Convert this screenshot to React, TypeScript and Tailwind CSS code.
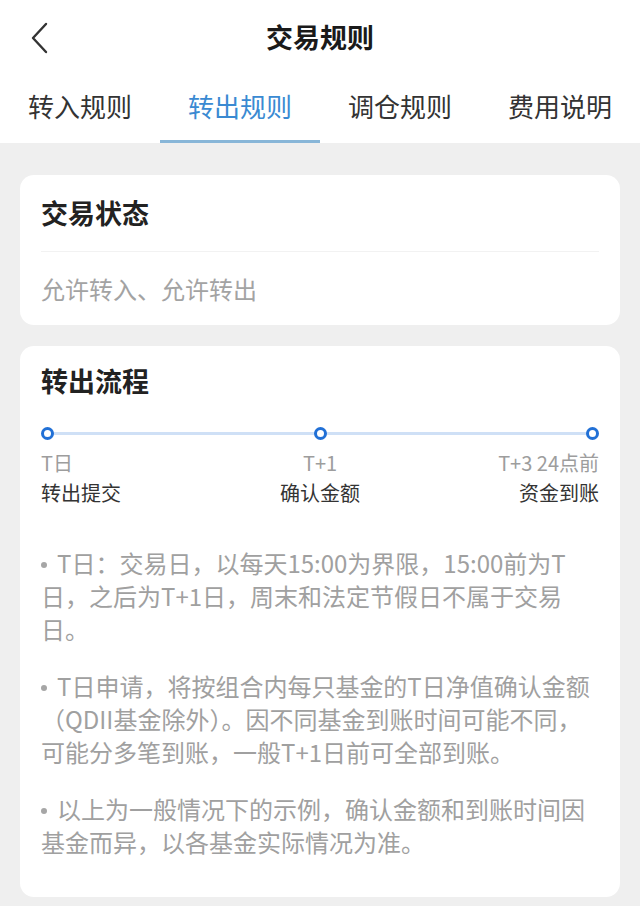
import React from "react";

const font = { fontFamily: '"Noto Sans CJK SC", "Noto Sans", sans-serif' };

function Dot() {
  return <div className="w-[13px] h-[13px] rounded-full border-[3px] border-[#2170d6] bg-white shrink-0" />;
}

function Bullet() {
  return <span className="inline-block w-[6px] h-[6px] rounded-full bg-[#a6a6a6] align-middle mr-[10px] -translate-y-[1px]" />;
}

export default function App() {
  const tabs = ["转入规则", "转出规则", "调仓规则", "费用说明"];
  const paras = [
    ["T日：交易日，以每天15:00为界限，15:00前为T", "日，之后为T+1日，周末和法定节假日不属于交易", "日。"],
    ["T日申请，将按组合内每只基金的T日净值确认金额", "（QDII基金除外）。因不同基金到账时间可能不同，", "可能分多笔到账，一般T+1日前可全部到账。"],
    ["以上为一般情况下的示例，确认金额和到账时间因", "基金而异，以各基金实际情况为准。"],
  ];
  return (
    <div className="w-[640px] min-h-[906px] bg-[#efefef]" style={font}>
      <div className="bg-white">
        <div className="relative h-[75px] flex items-center justify-center">
          <svg className="absolute left-[30px] top-[22px]" width="20" height="32" viewBox="0 0 20 32" fill="none">
            <path d="M16 2 L3 16 L16 30" stroke="#333" strokeWidth="2.4" strokeLinecap="round" strokeLinejoin="round" />
          </svg>
          <span className="text-[27px] font-bold text-[#1a1a1a]">交易规则</span>
        </div>
        <div className="grid grid-cols-4 h-[68px]">
          {tabs.map((t, i) => (
            <div key={t} className="relative flex items-center justify-center pb-[7px]">
              <span className={`text-[26px] ${i === 1 ? "text-[#3a8ad2]" : "text-[#333333]"}`}>{t}</span>
              {i === 1 && <div className="absolute bottom-0 left-0 right-0 h-[3px] bg-[#88b6d8]" />}
            </div>
          ))}
        </div>
      </div>
      <div className="px-5 pt-8 pb-3 flex flex-col gap-[21px]">
        <div className="bg-white rounded-[14px] px-[21px]">
          <div className="h-[77px] flex items-center border-b border-[#f2f2f2]">
            <span className="text-[27px] font-bold text-[#222]">交易状态</span>
          </div>
          <div className="h-[73px] flex items-center">
            <span className="text-[24px] text-[#a3a3a3]">允许转入、允许转出</span>
          </div>
        </div>
        <div className="bg-white rounded-[14px] px-[21px] pb-[39px]">
          <div className="h-[70px] flex items-center">
            <span className="text-[27px] font-bold text-[#222]">转出流程</span>
          </div>
          <div className="relative h-[13px] mt-[11px] flex items-center justify-between">
            <div className="absolute left-[6px] right-[6px] top-[5px] h-[3px] bg-[#cfe0f6]" />
            <div className="relative"><Dot /></div>
            <div className="relative"><Dot /></div>
            <div className="relative"><Dot /></div>
          </div>
          <div className="grid grid-cols-3 mt-[8px] leading-[30px]">
            <div className="text-left">
              <div className="text-[20px] text-[#9d9d9d]">T日</div>
              <div className="text-[20px] text-[#333]">转出提交</div>
            </div>
            <div className="text-center">
              <div className="text-[20px] text-[#9d9d9d]">T+1</div>
              <div className="text-[20px] text-[#333]">确认金额</div>
            </div>
            <div className="text-right">
              <div className="text-[20px] text-[#9d9d9d]">T+3 24点前</div>
              <div className="text-[20px] text-[#333]">资金到账</div>
            </div>
          </div>
          <div className="mt-[38px] flex flex-col gap-[24px]">
            {paras.map((p, i) => (
              <div key={i} className="text-[24px] leading-[33px] text-[#a0a0a0]">
                {p.map((l, j) => (
                  <div key={j} className="h-[33px] whitespace-nowrap">
                    {j === 0 && <Bullet />}
                    {l}
                  </div>
                ))}
              </div>
            ))}
          </div>
        </div>
      </div>
    </div>
  );
}
